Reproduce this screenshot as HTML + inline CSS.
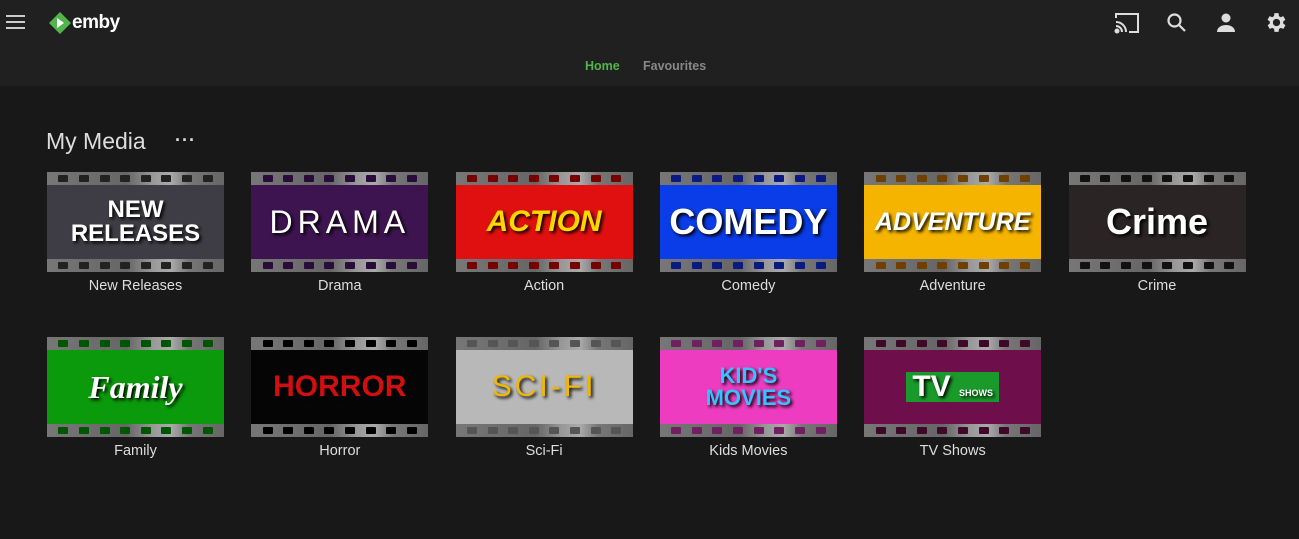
<!DOCTYPE html>
<html><head><style>
body{margin:0;width:1299px;height:539px;background:#181818;font-family:"Liberation Sans",sans-serif;overflow:hidden;position:relative}
.hdr{position:absolute;left:0;top:0;width:1299px;height:86px;background:#202020}
.card{position:absolute;width:177px;height:100px}
.strip{position:absolute;left:0;width:177px;height:13px;background:linear-gradient(90deg,#777 0%,#666 45%,#999 60%,#aaa 70%,#777 80%,#666 100%);display:flex;justify-content:space-around;align-items:center;padding:0 6px;box-sizing:border-box}
.strip i{display:block;width:10px;height:7px;background:var(--h);border-radius:1px}
.mid{position:absolute;left:0;top:13px;width:177px;height:74px;display:flex;align-items:center;justify-content:center;text-align:center;font-weight:bold;color:#fff}
.lbl{position:absolute;width:177px;text-align:center;color:#ddd;font-size:14.5px}
</style></head><body>
<div class="hdr">
<div style="position:absolute;left:6px;top:15px;width:19px">
<div style="height:2px;background:#ccc;margin-bottom:4px"></div><div style="height:2px;background:#ccc;margin-bottom:4px"></div><div style="height:2px;background:#ccc"></div></div>
<svg style="position:absolute;left:49px;top:12px" width="22" height="22" viewBox="0 0 22 22"><polygon points="11,0 22,11 11,22 0,11" fill="#52b54b"/><polygon points="8,6 15,11 8,16" fill="#fff"/></svg>
<div style="position:absolute;left:72px;top:12px;color:#fff;font-size:19px;font-weight:bold;letter-spacing:-0.5px">emby</div>
<svg style="position:absolute;left:1114px;top:12px" width="26" height="22" viewBox="0 0 26 22" fill="none" stroke="#ddd" stroke-width="2"><path d="M2 6V2h22v18h-9"/><path d="M2 10a10 10 0 0 1 10 10M2 14a6 6 0 0 1 6 6"/><circle cx="3" cy="19" r="1.5" fill="#ddd"/></svg>
<svg style="position:absolute;left:1166px;top:12px" width="22" height="22" viewBox="0 0 22 22" fill="none" stroke="#ddd" stroke-width="2.2"><circle cx="8.5" cy="8.5" r="6"/><path d="M13 13l6 6"/></svg>
<svg style="position:absolute;left:1215px;top:12px" width="22" height="22" viewBox="0 0 22 22" fill="#ddd"><circle cx="11" cy="6" r="4.5"/><path d="M2 20c0-5 5-7 9-7s9 2 9 7z"/></svg>
<svg style="position:absolute;left:1264px;top:10px" width="25" height="25" viewBox="0 0 24 24" fill="#ddd"><path d="M19.4 13a7.5 7.5 0 0 0 0-2l2.1-1.6-2-3.5-2.5 1a7.6 7.6 0 0 0-1.7-1L15 3h-4l-.4 2.9a7.6 7.6 0 0 0-1.7 1l-2.5-1-2 3.5L6.6 11a7.5 7.5 0 0 0 0 2l-2.1 1.6 2 3.5 2.5-1a7.6 7.6 0 0 0 1.7 1L11 21h4l.4-2.9a7.6 7.6 0 0 0 1.7-1l2.5 1 2-3.5zM13 15.5a3.5 3.5 0 1 1 0-7 3.5 3.5 0 0 1 0 7z" transform="translate(-1 0)"/></svg>
<div style="position:absolute;left:585px;top:59px;color:#52b54b;font-size:12.5px;font-weight:bold">Home</div>
<div style="position:absolute;left:643px;top:59px;color:#888;font-size:12.5px;font-weight:bold">Favourites</div>
</div>
<div style="position:absolute;left:46px;top:128px;color:#ddd;font-size:23px">My Media</div>
<div style="position:absolute;left:175px;top:130px;color:#ddd;font-size:18px;font-weight:bold;letter-spacing:1px">···</div>
<div id="c"></div>
<script>
var d=[["NEW<br>RELEASES","New Releases","#3e3d45","#222","#fff",24,"Liberation Sans"],
["DRAMA","Drama","#3d1450","#2a0c3a","#fff",32,"Liberation Sans;font-weight:normal;letter-spacing:5px"],
["ACTION","Action","#e01010","#700","#ffd700",30,"Liberation Sans;font-style:italic"],
["COMEDY","Comedy","#0a3ce8","#0a1a80","#fff",36,"Liberation Sans"],
["ADVENTURE","Adventure","#f5b400","#704000","#fff",25,"Liberation Sans;font-style:italic"],
["Crime","Crime","#2a2424","#111","#fff",36,"Liberation Sans"],
["Family","Family","#0b9a0b","#050","#fff",32,"Liberation Serif;font-style:italic"],
["HORROR","Horror","#050505","#000","#d01010",30,"Liberation Sans"],
["SCI-FI","Sci-Fi","#b8b8b8","#555","#f0b800",30,"Liberation Sans;font-weight:normal;letter-spacing:3px"],
["KID'S<br>MOVIES","Kids Movies","#ee3cc0","#702060","#3ac0ff",22,"Liberation Sans"],
["TV <span style='font-size:9px'>SHOWS</span>","TV Shows","#6e0e4a","#400828","#fff",30,"Liberation Sans;background:#1a9a2a;padding:0 6px"]];
var h="";d.forEach(function(c,i){var x=47+204.3*(i%6),y=i<6?172:337;
var holes="";for(var k=0;k<8;k++)holes+="<i></i>";
h+='<div class="card" style="left:'+x+'px;top:'+y+'px;--h:'+c[3]+'"><div class="strip" style="top:0">'+holes+'</div><div class="mid" style="background:'+c[2]+'"><span style="color:'+c[4]+';font-size:'+c[5]+'px;line-height:1;text-shadow:2px 2px 3px #000;font-family:'+c[6]+'">'+c[0]+'</span></div><div class="strip" style="top:87px">'+holes+'</div></div><div class="lbl" style="left:'+x+'px;top:'+(y+106)+'px">'+c[1]+'</div>';});
document.getElementById("c").innerHTML=h;
</script>
</body></html>
